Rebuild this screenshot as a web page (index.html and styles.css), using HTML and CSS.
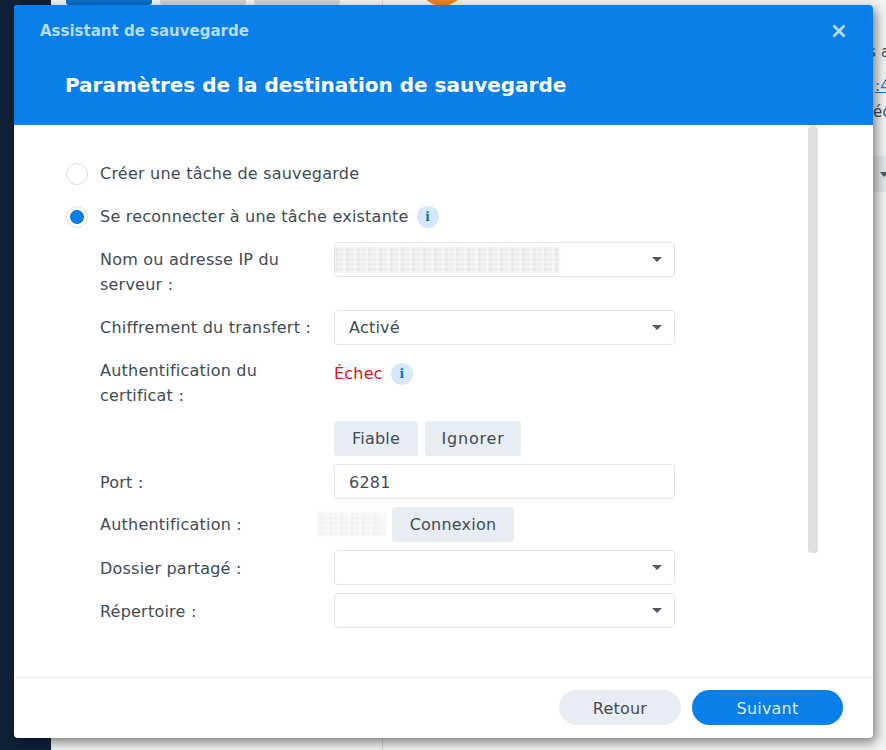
FILE: index.html
```html
<!DOCTYPE html>
<html lang="fr">
<head>
<meta charset="utf-8">
<title>Assistant de sauvegarde</title>
<link rel="stylesheet" href="styles.css">
</head>
<body>
<div class="desktop">
  <div class="backdrop">
    <div class="bg-tabs">
      <span class="bg-tab bg-tab-on"></span>
      <span class="bg-tab"></span>
      <span class="bg-tab"></span>
    </div>
    <span class="bg-divider"></span>
    <span class="bg-avatar"></span>
    <span class="bg-text bg-t1">s a</span>
    <span class="bg-text bg-t2">:4</span>
    <span class="bg-text bg-t3">éc</span>
    <span class="bg-bar"><span class="bg-caret"></span></span>
  </div>

  <section class="dialog">
    <header class="dialog-head">
      <div class="dialog-top">
        <span class="dialog-app">Assistant de sauvegarde</span>
        <svg class="dialog-close" width="14" height="14" viewBox="0 0 14 14"><path d="M1.5 1.5 12.5 12.5M12.5 1.5 1.5 12.5" fill="none" stroke="#b5dcfb" stroke-width="2.6"/></svg>
      </div>
      <h1 class="dialog-title">Paramètres de la destination de sauvegarde</h1>
    </header>

    <div class="dialog-body">
      <div class="scrollbar"></div>
      <div class="form">
        <div class="radio-row">
          <span class="radio"></span>
          <span>Créer une tâche de sauvegarde</span>
        </div>
        <div class="radio-row">
          <span class="radio radio-on"></span>
          <span>Se reconnecter à une tâche existante</span>
          <span class="info">i</span>
        </div>

        <div class="fields">
          <div class="label label-two">Nom ou adresse IP du serveur :</div>
          <div class="control">
            <div class="select"><span class="smudge smudge-long"></span><span class="caret"></span></div>
          </div>

          <div class="label">Chiffrement du transfert :</div>
          <div class="control">
            <div class="select"><span>Activé</span><span class="caret"></span></div>
          </div>

          <div class="label label-two">Authentification du certificat :</div>
          <div class="control control-status">
            <span class="fail">Échec</span><span class="info">i</span>
          </div>

          <div class="label"></div>
          <div class="control control-buttons">
            <span class="btn btn-trust">Fiable</span>
            <span class="btn btn-ignore">Ignorer</span>
          </div>

          <div class="label label-low">Port :</div>
          <div class="control">
            <div class="select select-low"><span>6281</span></div>
          </div>

          <div class="label">Authentification :</div>
          <div class="control control-auth">
            <span class="smudge smudge-short"></span>
            <span class="btn btn-connect">Connexion</span>
          </div>

          <div class="label label-low">Dossier partagé :</div>
          <div class="control">
            <div class="select"><span></span><span class="caret"></span></div>
          </div>

          <div class="label label-low">Répertoire :</div>
          <div class="control">
            <div class="select"><span></span><span class="caret"></span></div>
          </div>
        </div>
      </div>
    </div>

    <footer class="dialog-foot">
      <span class="pill pill-back">Retour</span>
      <span class="pill pill-next">Suivant</span>
    </footer>
  </section>
</div>
</body>
</html>
```

FILE: styles.css
```css
* { box-sizing: border-box; }
html, body { margin: 0; padding: 0; }
body {
  width: 886px;
  height: 750px;
  overflow: hidden;
  font-family: "DejaVu Sans", Verdana, sans-serif;
  font-size: 16px;
  letter-spacing: .22px;
  color: #414b55;
}
.desktop {
  position: relative;
  width: 886px;
  height: 750px;
  overflow: hidden;
  background: #0f2238;
}
.backdrop {
  position: absolute;
  left: 51px;
  top: 0;
  width: 835px;
  height: 750px;
  overflow: hidden;
  background: #f3f4f5;
}
.bg-tabs {
  position: absolute;
  left: 15px;
  top: 0;
  display: flex;
  gap: 8px;
}
.bg-tab {
  width: 86px;
  height: 5px;
  background: #cfd4d9;
  border-radius: 0 0 3px 3px;
}
.bg-tab-on { background: #0a6fc6; }
.bg-divider {
  position: absolute;
  left: 331px;
  top: 0;
  width: 1px;
  height: 750px;
  background: #d4d6d9;
}
.bg-avatar {
  position: absolute;
  left: 368px;
  top: -40px;
  width: 46px;
  height: 46px;
  border-radius: 50%;
  background: #e8862a;
}
.bg-text {
  position: absolute;
  font-size: 15px;
  line-height: 18px;
  white-space: nowrap;
  color: #414b55;
}
.bg-t1 { left: 817px; top: 43px; }
.bg-t2 { left: 824px; top: 77px; color: #0a7fe0; text-decoration: underline; }
.bg-t3 { left: 822px; top: 103px; }
.bg-bar {
  position: absolute;
  left: 820px;
  top: 156px;
  width: 15px;
  height: 36px;
  background: #e4e7ea;
}
.bg-caret {
  position: absolute;
  left: 9px;
  top: 16px;
  border: 4px solid transparent;
  border-top: 5px solid #4a5560;
  border-bottom: 0;
}

.dialog {
  position: absolute;
  left: 14px;
  top: 5px;
  width: 859px;
  height: 733px;
  display: flex;
  flex-direction: column;
  background: #fff;
  border-radius: 4px;
  overflow: hidden;
  box-shadow: 3px 4px 12px rgba(0, 0, 0, .5);
}
.dialog-head {
  height: 120px;
  flex: none;
  background: #0a7fea;
  padding: 0 26px;
}
.dialog-top {
  display: flex;
  justify-content: space-between;
  align-items: center;
  height: 52px;
}
.dialog-app {
  font-size: 15px;
  font-weight: 700;
  letter-spacing: 0;
  color: #b5dcfb;
}
.dialog-close { margin-right: 1px; }
.dialog-title {
  margin: 0;
  padding-left: 25px;
  font-size: 20px;
  line-height: 24px;
  padding-top: 16px;
  font-weight: 700;
  letter-spacing: 0;
  color: #fff;
}
.dialog-body {
  position: relative;
  flex: 1;
  min-height: 0;
}
.scrollbar {
  position: absolute;
  left: 794px;
  top: 1px;
  width: 10px;
  height: 427px;
  background: #e0e0e0;
  border-radius: 4px;
}
.form {
  padding: 31px 0 0 52px;
  display: flex;
  flex-direction: column;
  gap: 8px;
}
.radio-row {
  display: flex;
  align-items: center;
  height: 35px;
}
.radio {
  width: 22px;
  height: 22px;
  margin-right: 12px;
  border-radius: 50%;
  border: 1px solid #dcdfe2;
  background: #fff;
}
.radio-on {
  border-color: #f0dcd8;
  background: radial-gradient(circle, #0a7fea 0 6.6px, #fff 7.2px);
}
.info {
  width: 22px;
  height: 22px;
  margin-left: 8px;
  flex: none;
  display: inline-flex;
  align-items: center;
  justify-content: center;
  border-radius: 50%;
  background: #d5e8fb;
  color: #0f6cc4;
  font-family: "DejaVu Serif", serif;
  font-size: 12px;
  font-weight: 700;
}
.fields {
  display: grid;
  grid-template-columns: 234px 341px;
  row-gap: 8px;
  padding-left: 34px;
}
.label {
  display: flex;
  align-items: center;
  min-height: 35px;
  line-height: 25px;
}
.label-two {
  height: 60px;
  padding-right: 30px;
}
.label-low { padding-top: 2px; }
.control { min-height: 35px; }
.select {
  display: flex;
  align-items: center;
  justify-content: space-between;
  height: 35px;
  padding: 0 14px;
  border: 1px solid #dfe3e7;
  border-radius: 4px;
  background: #fff;
}
.select-low { padding-top: 2px; }
.caret {
  width: 0;
  height: 0;
  border-left: 5px solid transparent;
  border-right: 5px solid transparent;
  border-top: 5px solid #515b66;
  margin-right: -2px;
}
.smudge {
  display: block;
  filter: blur(1px);
  background:
    repeating-linear-gradient(0deg, rgba(255, 255, 255, .75) 0 2px, rgba(255, 255, 255, 0) 2px 5px),
    repeating-linear-gradient(90deg, #d9dcdf 0 3px, #f2f3f4 3px 5px, #e3e5e7 5px 8px, #f7f7f8 8px 11px);
}
.smudge-long {
  width: 225px;
  height: 26px;
  margin-left: -14px;
}
.smudge-short {
  width: 68px;
  height: 24px;
  margin-left: -16px;
  opacity: .6;
}
.control-status {
  display: flex;
  align-items: flex-start;
  padding-top: 10px;
}
.fail { color: #e0111c; line-height: 22px; }
.control-buttons {
  display: flex;
  gap: 7px;
}
.btn {
  display: inline-flex;
  align-items: center;
  justify-content: center;
  height: 35px;
  background: #e8edf4;
  border-radius: 3px;
}
.btn-trust { width: 84px; }
.btn-ignore { width: 96px; letter-spacing: .8px; }
.control-auth {
  display: flex;
  align-items: center;
}
.btn-connect {
  margin-left: 6px;
  width: 122px;
}
.dialog-foot {
  flex: none;
  height: 61px;
  border-top: 1px solid #edeef0;
  display: flex;
  justify-content: flex-end;
  align-items: flex-start;
  gap: 11px;
  padding: 12px 30px 0 0;
}
.pill {
  display: inline-flex;
  align-items: center;
  justify-content: center;
  height: 35px;
  padding-top: 2px;
  border-radius: 18px;
}
.pill-back {
  width: 122px;
  background: #e8edf4;
}
.pill-next {
  width: 151px;
  background: #0a7fea;
  color: #d6ecfd;
}
```
